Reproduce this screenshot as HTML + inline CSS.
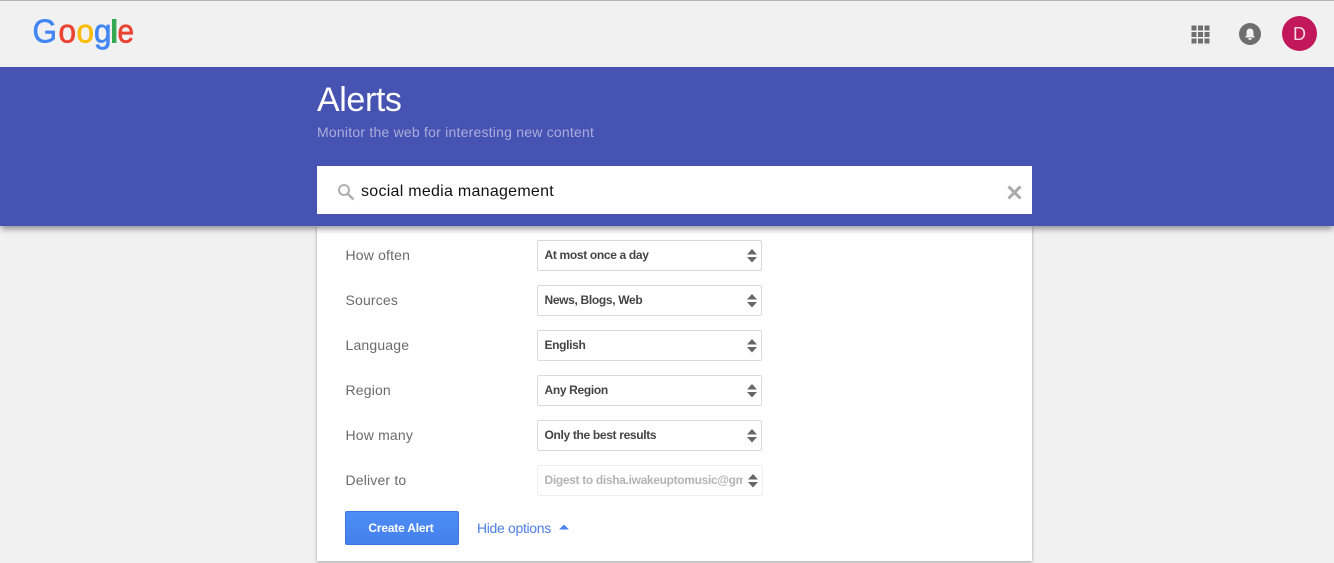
<!DOCTYPE html>
<html><head><meta charset="utf-8">
<style>
html,body{margin:0;padding:0}
body{width:1334px;height:563px;overflow:hidden;position:relative;background:#f1f1f1;font-family:"Liberation Sans",sans-serif}
.a{position:absolute;white-space:nowrap}
#top{left:0;top:0;width:1334px;height:1px;background:#b4b4b4}
#band{left:0;top:67px;width:1334px;height:159px;background:#4753b2;box-shadow:0 4px 6px -1px rgba(0,0,0,.4);z-index:2}
#card{left:317px;top:226px;width:715px;height:335px;background:#fff;box-shadow:0 1px 3px rgba(0,0,0,.35)}
#search{left:317px;top:166px;width:715px;height:48px;background:#fff;z-index:3}
.lbl{left:345.5px;font-size:14px;color:#6b6b6b;line-height:18px;letter-spacing:.17px}
.sel{left:537px;width:223px;height:29px;background:#fff;border:1px solid #d9d9d9;border-radius:2px;font-size:12px;font-weight:bold;color:#444;line-height:28px;letter-spacing:-.33px}
.sel span{position:absolute;left:6.5px;top:0;width:198px;overflow:hidden}
.sel svg{position:absolute;right:4px;top:8px}
</style></head><body>
<div class="a" id="top"></div>

<svg class="a" style="left:0;top:0" width="200" height="67" font-family="Liberation Sans" font-size="33">
<text x="32.500" y="42.500" fill="#4285f4" stroke="#4285f4" stroke-width=".6" textLength="24.500" lengthAdjust="spacingAndGlyphs">G</text>
<text x="58.500" y="42.500" fill="#ea4335" textLength="17.500" lengthAdjust="spacingAndGlyphs" stroke="#ea4335" stroke-width=".7">o</text>
<text x="76.500" y="42.500" fill="#fbbc05" textLength="17.500" lengthAdjust="spacingAndGlyphs" stroke="#fbbc05" stroke-width=".7">o</text>
<text x="94" y="42.500" fill="#4285f4" textLength="17.500" lengthAdjust="spacingAndGlyphs" stroke="#4285f4" stroke-width=".7">g</text>
<rect x="112" y="19" width="4.400" height="24" fill="#34a853"/>
<text x="117.500" y="42.500" fill="#ea4335" textLength="16.500" lengthAdjust="spacingAndGlyphs" stroke="#ea4335" stroke-width=".7">e</text>
</svg>

<svg class="a" style="left:1190px;top:24px" width="22" height="22" fill="#6e6e6e">
<rect x="1.500" y="1.500" width="5" height="5"/><rect x="8" y="1.500" width="5" height="5"/><rect x="14.500" y="1.500" width="5" height="5"/>
<rect x="1.500" y="8" width="5" height="5"/><rect x="8" y="8" width="5" height="5"/><rect x="14.500" y="8" width="5" height="5"/>
<rect x="1.500" y="14.500" width="5" height="5"/><rect x="8" y="14.500" width="5" height="5"/><rect x="14.500" y="14.500" width="5" height="5"/>
</svg>
<svg class="a" style="left:1239px;top:23px" width="22" height="22">
<circle cx="11" cy="11" r="11" fill="#6e6e6e"/>
<path d="M11 5.500c-2.500 0-3.500 2-3.500 4v3l-1.500 2h10l-1.500-2v-3c0-2-1-4-3.500-4z" fill="#f1f1f1"/>
<rect x="9.500" y="15" width="3" height="1.800" fill="#f1f1f1"/>
</svg>
<div class="a" style="left:1282px;top:16px;width:35px;height:35px;border-radius:50%;background:#c2185b;color:#f5d5e2;font-size:18px;line-height:36px;text-align:center">D</div>

<div class="a" id="band"></div>
<div class="a" style="left:317px;top:80px;font-size:34px;line-height:40px;color:#fff;z-index:4;letter-spacing:-.4px">Alerts</div>
<div class="a" style="left:317px;top:124px;font-size:14px;line-height:17px;color:#a9aedc;z-index:4;letter-spacing:.22px">Monitor the web for interesting new content</div>

<div class="a" id="search"></div>
<svg class="a" style="left:337px;top:183px;z-index:4" width="18" height="18" fill="none" stroke="#b0b0b0">
<circle cx="7" cy="7" r="5" stroke-width="2"/><path d="M11 11l5.500 5.500" stroke-width="2.600"/>
</svg>
<div class="a" style="left:361px;top:182px;font-size:16px;line-height:20px;color:#111;z-index:4;letter-spacing:.27px">social media management</div>
<svg class="a" style="left:1006px;top:184px;z-index:4" width="17" height="17" stroke="#aaa" stroke-width="3" fill="none">
<path d="M2.500 2.500l12 12M14.500 2.500l-12 12"/>
</svg>

<div class="a" id="card"></div>

<div class="a lbl" style="top:246px">How often</div>
<div class="a lbl" style="top:291px">Sources</div>
<div class="a lbl" style="top:336px">Language</div>
<div class="a lbl" style="top:381px">Region</div>
<div class="a lbl" style="top:426px">How many</div>
<div class="a lbl" style="top:471px">Deliver to</div>

<div class="a sel" style="top:240px"><span>At most once a day</span><svg width="10" height="14" fill="#666"><path d="M0 5.500L5 0l5 5.500zM0 8l5 5.500L10 8z"/></svg></div>
<div class="a sel" style="top:285px"><span>News, Blogs, Web</span><svg width="10" height="14" fill="#666"><path d="M0 5.500L5 0l5 5.500zM0 8l5 5.500L10 8z"/></svg></div>
<div class="a sel" style="top:330px"><span>English</span><svg width="10" height="14" fill="#666"><path d="M0 5.500L5 0l5 5.500zM0 8l5 5.500L10 8z"/></svg></div>
<div class="a sel" style="top:375px"><span>Any Region</span><svg width="10" height="14" fill="#666"><path d="M0 5.500L5 0l5 5.500zM0 8l5 5.500L10 8z"/></svg></div>
<div class="a sel" style="top:420px"><span>Only the best results</span><svg width="10" height="14" fill="#666"><path d="M0 5.500L5 0l5 5.500zM0 8l5 5.500L10 8z"/></svg></div>
<div class="a sel" style="top:465px;width:224px;border-color:#efefef;color:#b4b4b4"><span>Digest to disha.iwakeuptomusic@gm</span><svg width="10" height="14" fill="#666" style="right:4px"><path d="M0 5.500L5 0l5 5.500zM0 8l5 5.500L10 8z"/></svg></div>

<div class="a" style="left:345px;top:511px;width:110px;padding-right:2px;height:32px;background:linear-gradient(#4d8df8,#4580ec);border:1px solid #3b78e0;border-radius:2px;color:#fff;font-size:12px;font-weight:bold;line-height:32px;text-align:center;letter-spacing:-.2px">Create Alert</div>
<div class="a" style="left:477px;top:519px;font-size:14px;line-height:18px;color:#4d7fe6;letter-spacing:-.33px">Hide options</div>
<svg class="a" style="left:559px;top:524px" width="10" height="6" fill="#4d85ee"><path d="M0 5.500L5 .5l5 5z"/></svg>
</body></html>
